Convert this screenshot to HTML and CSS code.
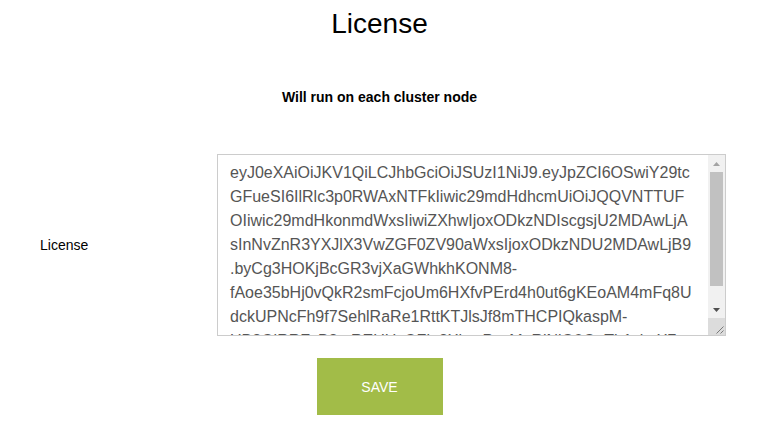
FILE: index.html
```html
<!DOCTYPE html>
<html>
<head>
  <title>License</title>
  <link rel="stylesheet" href="styles.css">
</head>
<body>

<div class="page">
  <h1>License</h1>
  <p class="note">Will run on each cluster node</p>

  <div class="form-row">
    <label for="license">License</label>
    <div class="license-box">
      <textarea id="license">eyJ0eXAiOiJKV1QiLCJhbGciOiJSUzI1NiJ9.eyJpZCI6OSwiY29tcGFueSI6IlRlc3p0RWAxNTFkIiwic29mdHdhcmUiOiJQQVNTTUFOIiwic29mdHkonmdWxsIiwiZXhwIjoxODkzNDIscgsjU2MDAwLjAsInNvZnR3YXJlX3VwZGF0ZV90aWxsIjoxODkzNDU2MDAwLjB9.byCg3HOKjBcGR3vjXaGWhkhKONM8-fAoe35bHj0vQkR2smFcjoUm6HXfvPErd4h0ut6gKEoAM4mFq8UdckUPNcFh9f7SehlRaRe1RttKTJlsJf8mTHCPIQkaspM-UB2QlRRFcB3mREUUyQZiu3XkwtPzsMaRiNiQ0GnTh1sbvX7p</textarea>
      <div class="scrollbar">
        <div class="sb-btn">
          <svg width="7" height="4" viewBox="0 0 7 4"><polygon points="3.5,0 7,4 0,4" fill="#a3a3a3"/></svg>
        </div>
        <div class="sb-track"><div class="sb-thumb"></div></div>
        <div class="sb-btn">
          <svg width="7" height="4" viewBox="0 0 7 4"><polygon points="0,0 7,0 3.5,4" fill="#505050"/></svg>
        </div>
        <div class="sb-corner">
          <svg width="17" height="17" viewBox="0 0 17 17"><path d="M15.5 8.5 L8.5 15.5 M15.5 12.5 L12.5 15.5" stroke="#7a7a7a" stroke-width="1"/></svg>
        </div>
      </div>
    </div>
  </div>

  <div class="actions">
    <button class="save">SAVE</button>
  </div>
</div>

</body>
</html>
```

FILE: styles.css
```css
body {
  margin: 0;
  background-color: #fff;
  color: #000;
  font-family: "Liberation Sans", Arial, sans-serif;
}

.page {
  width: 759px;
}

h1 {
  margin: 10px 0 0;
  font-size: 28px;
  font-weight: normal;
  line-height: 28px;
  text-align: center;
}

.note {
  margin: 49px 0 0;
  font-size: 14px;
  font-weight: bold;
  line-height: 20px;
  text-align: center;
}

.form-row {
  display: flex;
  align-items: center;
  margin-top: 47px;
}

.form-row label {
  width: 177px;
  padding-left: 40px;
  font-size: 14px;
}

.license-box {
  display: flex;
  box-sizing: border-box;
  width: 509px;
  height: 182px;
  border: 1px solid #ccc;
}

#license {
  flex: 1;
  min-width: 0;
  margin: 0;
  padding: 6px 16px 6px 12px;
  border: none;
  outline: none;
  color: #555;
  font-family: "Liberation Sans", Arial, sans-serif;
  font-size: 16px;
  line-height: 24px;
  resize: none;
  overflow: hidden;
}

/* fake classic scrollbar */
.scrollbar {
  display: flex;
  flex-direction: column;
  width: 17px;
  background: #f1f1f1;
}

.sb-btn {
  display: flex;
  align-items: center;
  justify-content: center;
  height: 17px;
}

.sb-track {
  flex: 1;
  padding: 0 2px;
}

.sb-thumb {
  height: 114px;
  background: #c1c1c1;
}

.sb-corner {
  height: 17px;
  background: #dcdcdc;
}

.sb-corner svg {
  display: block;
}

.actions {
  display: flex;
  justify-content: center;
  margin-top: 22px;
}

.save {
  width: 126px;
  height: 57px;
  border: none;
  background-color: #a2bc48;
  color: #fff;
  font-family: "Liberation Sans", Arial, sans-serif;
  font-size: 14px;
  cursor: pointer;
}
```
